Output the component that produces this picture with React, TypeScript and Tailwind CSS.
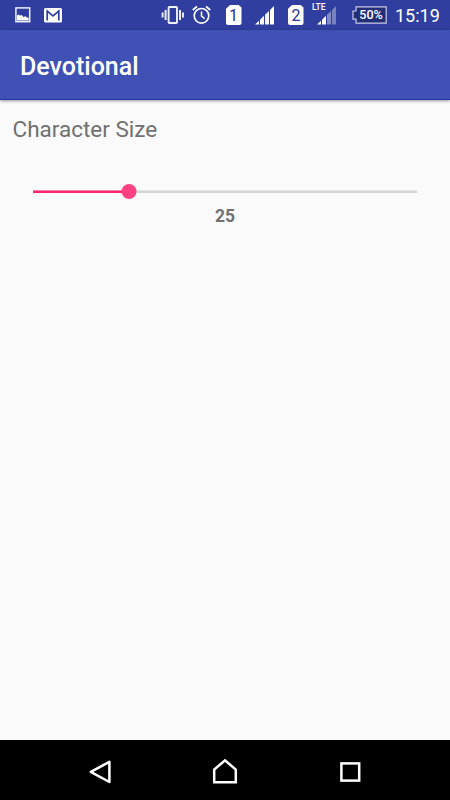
import { useState } from "react"

function ImageIcon() {
  return (
    <svg width="16" height="16" viewBox="0 0 16 16" fill="none">
      <rect x="0.9" y="0.9" width="13.8" height="13.8" stroke="#eceefa" strokeWidth="1.5" />
      <path d="M2 13.4V8.6L3.6 7.6L5 8.8L6.4 7.8L8.4 10L10.4 9.2L12 10.4L13.6 10.8V13.4Z" fill="#fff" />
    </svg>
  )
}

function MailIcon() {
  return (
    <svg width="18" height="15" viewBox="0 0 18 15">
      <rect width="18" height="14.6" rx="1.6" fill="#fff" />
      <path d="M3.2 12.6V3L9 7.8L14.8 3V12.6" fill="none" stroke="#303f9f" strokeWidth="1.7" />
    </svg>
  )
}

function VibrateIcon() {
  return (
    <svg width="24" height="18" viewBox="0 0 24 18" fill="none" stroke="#eef0fb">
      <rect x="7.6" y="1" width="8.4" height="16" rx="0.8" strokeWidth="1.9" />
      <path d="M4.6 4V14M19 4V14" strokeWidth="2" />
      <path d="M1.6 6.5V11.5M22 6.5V11.5" strokeWidth="1.9" />
    </svg>
  )
}

function AlarmIcon() {
  return (
    <svg width="20" height="19" viewBox="0 0 20 19" fill="none" stroke="#fff">
      <circle cx="9.5" cy="10.8" r="7.3" strokeWidth="1.6" />
      <path d="M9.5 6.4V11L12.6 13.6" strokeWidth="1.5" />
      <path d="M0.8 5L5 1.4M14 1.4L18.2 5" strokeWidth="1.8" />
    </svg>
  )
}

function SimIcon({ slot }: { slot: number }) {
  return (
    <div className="relative flex h-5 w-4 items-center justify-center">
      <svg className="absolute inset-0" width="16" height="20" viewBox="0 0 16 20">
        <path d="M4 0H12.6L15.5 2.6V18Q15.5 20 13.5 20H2Q0 20 0 18V3.8Z" fill="#fff" />
      </svg>
      <span className="relative pt-0.5 text-[16px] leading-5 text-[#26358f]">{slot}</span>
    </div>
  )
}

function SignalIcon({ weak = false }: { weak?: boolean }) {
  return (
    <svg width="20" height="19" viewBox="0 0 20 19" fill="#fff">
      <path d="M0 18.5L4 14.7V18.5Z" />
      <path d="M5 13.7L9 9.8V18.5H5Z" />
      <path d="M10 8.8L14 5V18.5H10Z" opacity={weak ? 0.4 : 0.95} />
      <path d="M15 4L19 0V18.5H15Z" opacity={weak ? 0.35 : 1} />
    </svg>
  )
}

function Battery() {
  return (
    <div className="relative flex h-[18px] w-[35px] items-center justify-center pl-[3px]">
      <svg className="absolute inset-0" width="35" height="18" viewBox="0 0 35 18">
        <path d="M4 0.8H34.2V17.2H4V13.2H1V5H4Z" fill="#242f78" stroke="#c7cbe6" strokeWidth="1.2" />
      </svg>
      <span className="relative text-[12.5px] leading-[18px] font-medium text-white">50%</span>
    </div>
  )
}

function StatusBar() {
  return (
    <div className="flex h-[30px] items-start bg-[#303f9f] text-white">
      <div className="mt-[7px] ml-[15px]">
        <ImageIcon />
      </div>
      <div className="mt-[7.5px] ml-[12.5px]">
        <MailIcon />
      </div>
      <div className="mt-1.5 ml-[99.5px]">
        <VibrateIcon />
      </div>
      <div className="mt-[5px] ml-[7px]">
        <AlarmIcon />
      </div>
      <div className="mt-[5px] ml-[13.5px]">
        <SimIcon slot={1} />
      </div>
      <div className="mt-1.5 ml-[13.5px]">
        <SignalIcon />
      </div>
      <div className="mt-[5px] ml-[13px]">
        <SimIcon slot={2} />
      </div>
      <div className="relative mt-1.5 ml-[13px]">
        <SignalIcon weak />
        <span className="absolute -top-[4px] -left-[5px] text-[8.5px] leading-[10px] font-medium">LTE</span>
      </div>
      <div className="mt-1.5 ml-[15px]">
        <Battery />
      </div>
      <span className="ml-[8px] text-[18px] leading-8">15:19</span>
    </div>
  )
}

function NavBar() {
  return (
    <nav className="flex h-[60px] shrink-0 items-center bg-black pl-[88px]">
      <button aria-label="Back">
        <svg width="24" height="28" viewBox="0 0 24 28" fill="none" stroke="#fff" strokeWidth="2.5" strokeLinejoin="round">
          <path d="M21.4 5.8V26L2.8 15.9Z" />
        </svg>
      </button>
      <button aria-label="Home" className="ml-[99px]">
        <svg width="28" height="28" viewBox="0 0 28 28" fill="none" stroke="#fff" strokeWidth="2.5">
          <path d="M3.2 13.5V26.2H24.8V13.5L14 4.4Z" />
        </svg>
      </button>
      <button aria-label="Recent apps" className="ml-[97px]">
        <svg width="28" height="28" viewBox="0 0 28 28" fill="none" stroke="#fff" strokeWidth="2.5">
          <rect x="5.4" y="7.4" width="17.8" height="17.2" />
        </svg>
      </button>
    </nav>
  )
}

export default function App() {
  const [size, setSize] = useState(25)

  return (
    <div className="flex h-[800px] w-[450px] flex-col overflow-hidden bg-[#fafafa] font-['Roboto',sans-serif]">
      <StatusBar />

      {/* Toolbar */}
      <header className="flex h-[70px] shrink-0 items-center border-b border-[#1e35a8] bg-[#3f51b5] pt-1 pl-5 shadow-[0_1px_3px_rgba(0,0,0,0.4)]">
        <h1 className="text-[25px] font-medium text-white">Devotional</h1>
      </header>

      <main className="flex-1">
        <h2 className="mt-[13px] ml-[12.5px] text-[22.5px] leading-8 text-[#707070]">Character Size</h2>

        {/* Size slider */}
        <div className="relative mx-[33px] mt-[38px] flex h-4 items-center">
          <div className="h-[3px] w-full border-t border-[#e5e5e5] bg-[#d5d5d5]">
            <div className="-mt-px h-[3px] border-t border-[#ff80ab] bg-[#ff2672]" style={{ width: `${size}%` }} />
          </div>
          <div
            className="absolute top-[0.5px] size-[15px] -translate-x-1/2 rounded-full bg-[#ff4081]"
            style={{ left: `${size}%` }}
          />
          <input
            type="range"
            aria-label="Character Size"
            value={size}
            onChange={(e) => setSize(Number(e.target.value))}
            className="absolute inset-0 w-full opacity-0"
          />
        </div>
        <p className="mt-[5px] text-center text-[17.5px] leading-6 font-bold text-[#707070]">{size}</p>
      </main>

      <NavBar />
    </div>
  )
}
